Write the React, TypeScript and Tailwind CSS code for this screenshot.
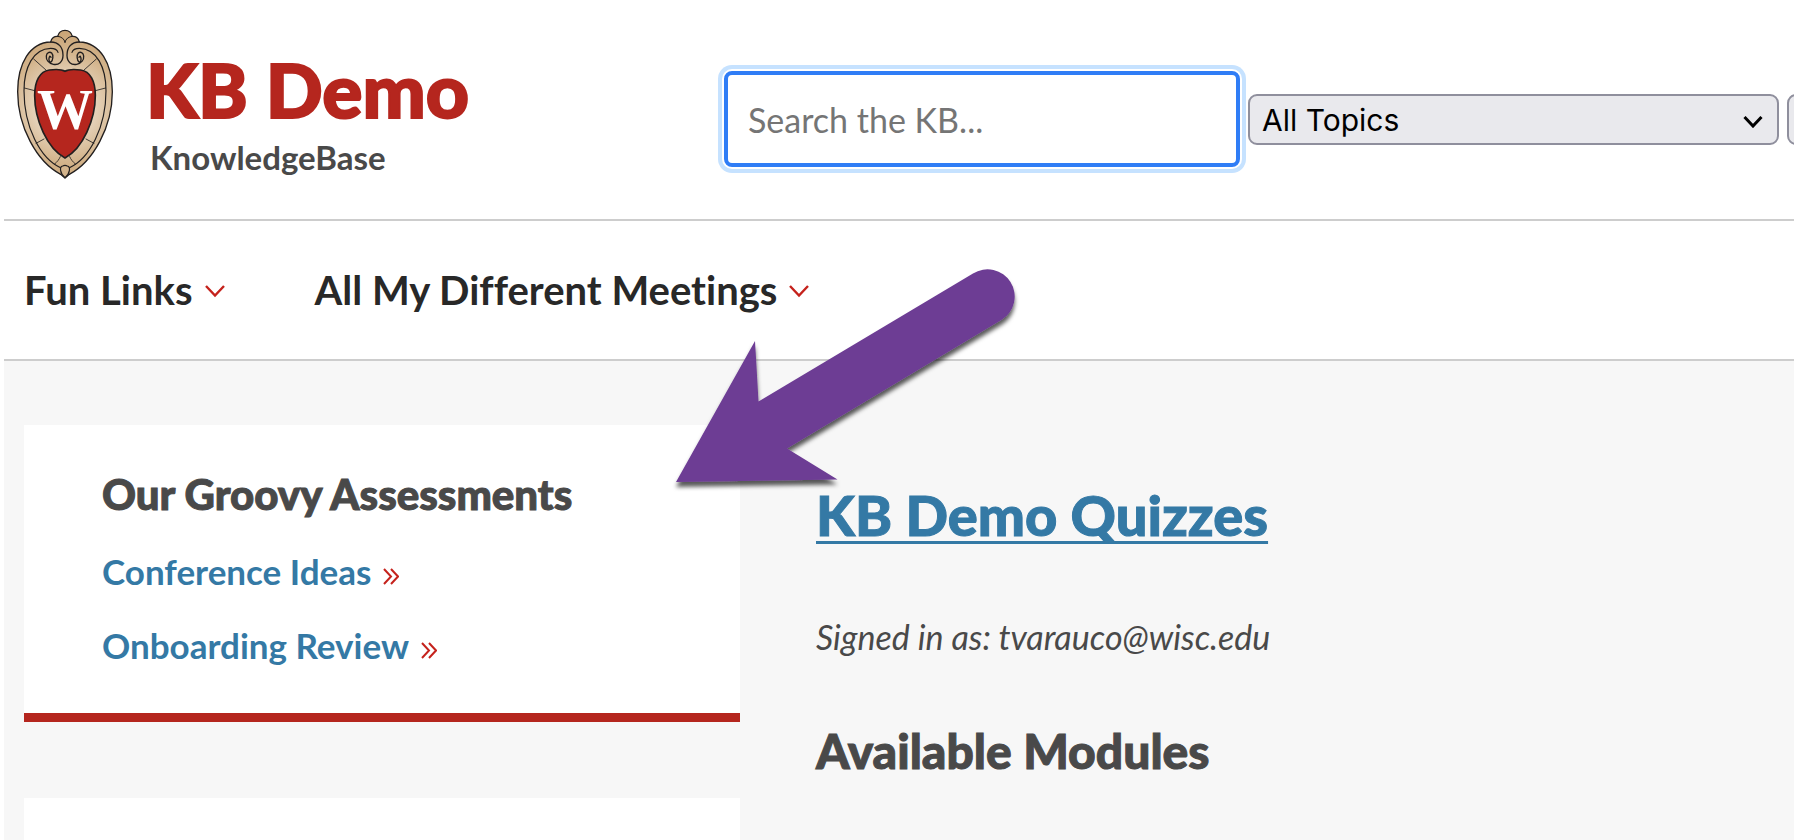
const CrestHalf = () => (
  <g fill="none" stroke="#221f1f" strokeWidth="4" strokeLinecap="round">
    <path d="M183 474 C120 446 72 350 72 242 C72 172 100 116 152 115 C164 115 172 120 174 127" strokeWidth="3.5" />
    <path d="M152 96 C176 96 189 112 189 136 C189 156 176 166 160 163 C145 160 138 149 139 138 C140 128 149 124 155 129 C161 135 159 151 153 156 C148 158 145 149 148 141 C149 138 152 138 153 142" />
    <path d="M195 97 C193 86 184 80 173 79" strokeWidth="3" />
    <path d="M101 147 L139 181" strokeWidth="2.5" />
    <path d="M73 234 L104 242" strokeWidth="2.5" />
    <path d="M108 400 L132 387" strokeWidth="2.5" />
    <path d="M163 463 C172 455 177 449 181 440" strokeWidth="2.5" />
  </g>
);

const Crest = () => (
  <svg viewBox="48 57 294 453" className="h-[151px] w-[98px] shrink-0" role="img" aria-label="University crest">
    <defs>
      <radialGradient id="sand" gradientUnits="userSpaceOnUse" cx="195" cy="290" r="220">
        <stop offset="0.4" stopColor="#e6d3bb" />
        <stop offset="0.75" stopColor="#d3b48c" />
        <stop offset="1" stopColor="#cba678" />
      </radialGradient>
    </defs>
    <path
      d="M152 96 C90 98 53 160 53 245 C53 350 110 455 182 493 L195 504 L208 493 C280 455 337 350 337 245 C337 160 300 98 238 96 C236 84 226 78 217 79 C214 67 205 61 195 61 C185 61 176 67 173 79 C164 78 154 84 152 96Z"
      fill="url(#sand)"
      stroke="#221f1f"
      strokeWidth="4"
      strokeLinejoin="round"
    />
    <CrestHalf />
    <g transform="matrix(-1 0 0 1 390 0)">
      <CrestHalf />
    </g>
    <path
      d="M195 184 C182 176 163 178 148 180 C119 184 104 214 104 256 C104 330 142 416 195 444 C248 416 286 330 286 256 C286 214 271 184 242 180 C227 178 208 176 195 184Z"
      fill="#b5261e"
      stroke="#221f1f"
      strokeWidth="5"
    />
    <path d="M195 503 C179 490 178 470 188 468 C192 466 198 466 202 468 C212 470 211 490 195 503Z" fill="#d3b48c" stroke="#221f1f" strokeWidth="3.5" />
    <text x="195" y="358" textAnchor="middle" className="fill-white font-['Liberation_Serif',serif] text-[168px] font-bold">
      W
    </text>
  </svg>
);

const Chevron = () => (
  <svg viewBox="0 0 20 16" className="h-4 w-5" fill="none" stroke="#c5221c" strokeWidth="2.4" aria-hidden="true">
    <path d="M1 4 L10 13.5 L19 4" />
  </svg>
);

const Raquo = () => (
  <svg viewBox="0 0 16 17" className="mt-2.5 h-[17px] w-4" fill="none" stroke="#c5221c" strokeWidth="2" aria-hidden="true">
    <path d="M1 1 L8 8.500 L1 16 M8 1 L15 8.500 L8 16" />
  </svg>
);

const Arrow = () => (
  <svg
    viewBox="660 260 370 240"
    className="pointer-events-none absolute top-[260px] left-[660px] h-[240px] w-[370px]"
    aria-hidden="true"
  >
    <defs>
      <filter id="drop" x="-10%" y="-10%" width="120%" height="120%">
        <feDropShadow dx="0" dy="5" stdDeviation="2" floodColor="#000" floodOpacity="0.65" />
      </filter>
    </defs>
    <path
      d="M676 482 L755 341 L758.500 401.500 L973 273.500 A27 27 0 0 1 1002 319.500 L787 448.500 L837.500 479.500Z"
      fill="#6d3c94"
      filter="url(#drop)"
    />
  </svg>
);

const menus = ["Fun Links", "All My Different Meetings"];
const links = ["Conference Ideas", "Onboarding Review"];

const App = () => {
  return (
    <div className="relative flex min-h-screen flex-col overflow-hidden bg-white pl-1 font-[Lato,sans-serif] text-[#494949] [font-variant-ligatures:none]">
      <header className="grid grid-cols-[2fr_3fr] border-b-2 border-[#cdcdcd] pt-[29px] pb-[39px]">
        <div className="flex gap-8 pl-3">
          <Crest />
          <div className="pt-[22px]">
            <p className="text-[75px] leading-[76px] font-black text-[#b5261e] [-webkit-text-stroke:2px_#b5261e]">KB Demo</p>
            <p className="mt-2.5 pl-1 text-[33px] leading-10 font-bold">KnowledgeBase</p>
          </div>
        </div>
        <form className="mt-[42px] flex h-24 items-center gap-2 self-start pl-1">
          <input
            type="text"
            aria-label="Search the KB"
            placeholder="Search the KB..."
            className="h-24 w-[516px] shrink-0 rounded-lg border-4 border-[#2f7df6] bg-white px-5 text-[34px] shadow-[0_0_0_2px_#ffffff,0_0_0_6px_#c6e2ff] outline-none placeholder:text-[#757575]"
          />
          <div className="relative flex-1">
            <select
              aria-label="Topic"
              className="block h-[51px] w-full appearance-none rounded-[9px] border-2 border-[#8f8f9d] bg-[#e9e9ed] px-3 pt-0.5 font-[Inter,sans-serif] text-[30px] text-black"
            >
              <option>All Topics</option>
            </select>
            <svg
              viewBox="0 0 20 12"
              className="pointer-events-none absolute top-[22px] right-4 h-3 w-5"
              fill="none"
              stroke="#000"
              strokeWidth="3"
              aria-hidden="true"
            >
              <path d="M1.500 1 L10 10 L18.500 1" />
            </svg>
          </div>
          <button
            type="submit"
            aria-label="Search"
            className="-mr-[93px] h-[51px] w-[100px] shrink-0 rounded-[9px] border-2 border-[#8f8f9d] bg-[#e9e9ed]"
          />
        </form>
      </header>

      <nav className="flex gap-[90px] border-b-2 border-[#cdcdcd] py-[45px] pl-5">
        {menus.map((menu) => (
          <button key={menu} type="button" className="flex items-center gap-3 text-[40px] leading-[48px] font-bold text-[#282828]">
            {menu}
            <Chevron />
          </button>
        ))}
      </nav>

      <main className="flex flex-1 bg-[#f7f7f7] pt-16">
        <aside className="ml-5 flex w-2/5 shrink-0 flex-col gap-[76px]">
          <section className="border-b-[9px] border-[#b5261e] bg-white px-[78px] pt-11 pb-[46px]">
            <h2 className="text-[42px] leading-[50px] font-black [-webkit-text-stroke:1px_#494949]">Our Groovy Assessments</h2>
            <ul className="mt-[30px] flex flex-col gap-[30px]">
              {links.map((link) => (
                <li key={link}>
                  <a href="#" className="flex items-center gap-3 text-[35px] leading-[44px] font-bold text-[#3479a5]">
                    {link}
                    <Raquo />
                  </a>
                </li>
              ))}
            </ul>
          </section>
          <section className="min-h-[42px] flex-1 bg-white" />
        </aside>
        <div className="ml-[76px] pt-[58px]">
          <h1 className="text-[56px] leading-[64px] font-black">
            <a
              href="#"
              className="text-[#3479a5] underline decoration-[3px] underline-offset-[5px] [-webkit-text-stroke:1px_#3479a5] [text-decoration-skip-ink:none]"
            >
              KB Demo Quizzes
            </a>
          </h1>
          <p className="mt-[68px] text-[34px] leading-[44px] italic">Signed in as: tvarauco@wisc.edu</p>
          <h2 className="mt-16 text-[48px] leading-[56px] font-black [-webkit-text-stroke:1px_#494949]">Available Modules</h2>
        </div>
      </main>

      <Arrow />
    </div>
  );
};

export default App;
